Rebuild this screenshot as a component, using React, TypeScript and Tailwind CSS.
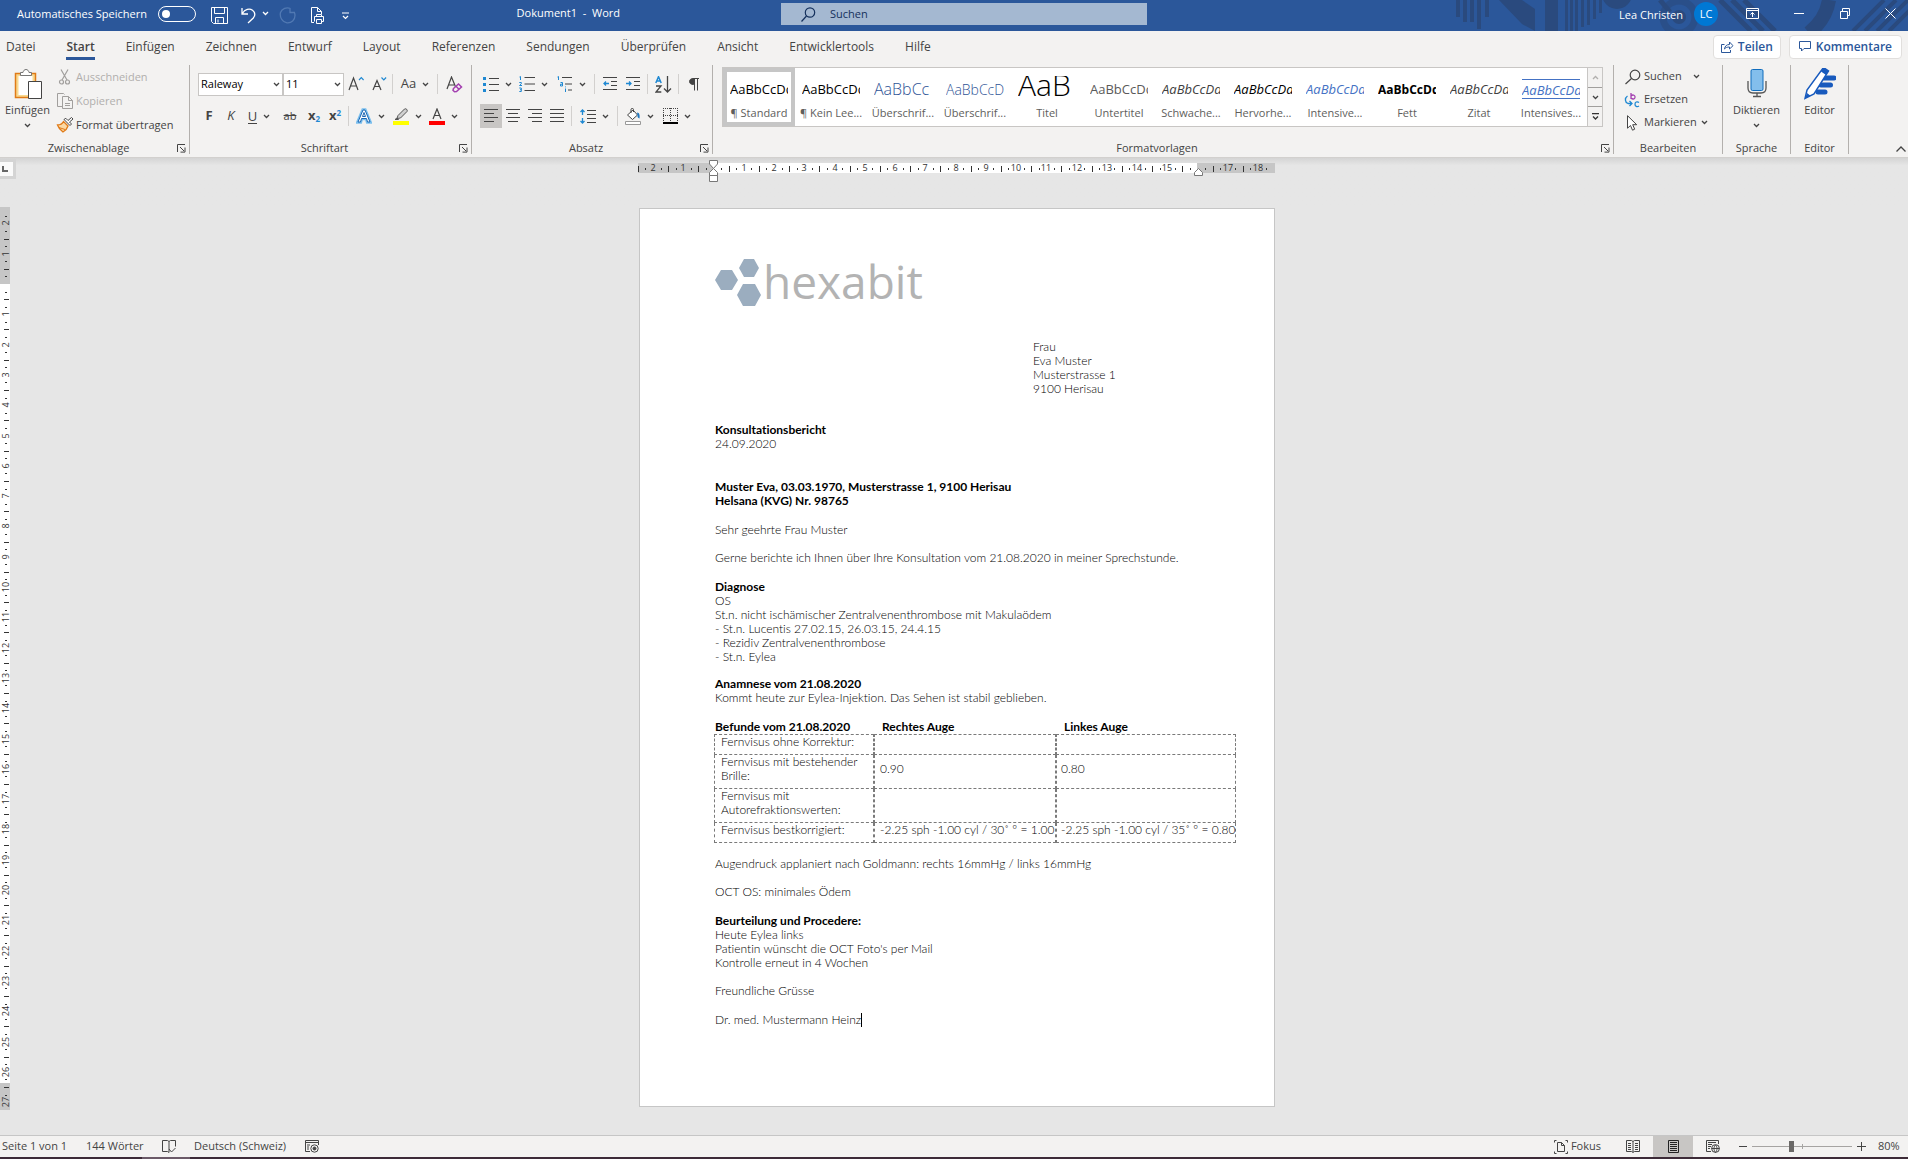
import type { ReactNode } from "react";
import clsx from "clsx";

const tabs = [
  "Datei",
  "Start",
  "Einfügen",
  "Zeichnen",
  "Entwurf",
  "Layout",
  "Referenzen",
  "Sendungen",
  "Überprüfen",
  "Ansicht",
  "Entwicklertools",
  "Hilfe",
];

const styles = [
  { label: "¶ Standard", sample: "text-[13px] text-black" },
  { label: "¶ Kein Lee...", sample: "text-[13px] text-black" },
  { label: "Überschrif...", sample: "text-base font-light text-[#2f5496]" },
  { label: "Überschrif...", sample: "text-sm font-light text-[#2f5496]" },
  { label: "Titel", sample: "text-3xl font-light text-black" },
  { label: "Untertitel", sample: "text-[13px] text-[#5a5a5a]" },
  { label: "Schwache...", sample: "text-[13px] italic text-[#404040]" },
  { label: "Hervorhe...", sample: "text-[13px] italic text-black" },
  { label: "Intensive...", sample: "text-[13px] italic text-[#4472c4]" },
  { label: "Fett", sample: "text-xs font-bold text-black" },
  { label: "Zitat", sample: "text-[13px] italic text-[#404040]" },
  {
    label: "Intensives...",
    sample: "text-[13px] italic text-[#4472c4] border-y border-[#4472c4]",
  },
];

const findings = [
  { name: "Fernvisus ohne Korrektur:", right: "", left: "" },
  { name: "Fernvisus mit bestehender Brille:", right: "0.90", left: "0.80" },
  { name: "Fernvisus mit Autorefraktionswerten:", right: "", left: "" },
  {
    name: "Fernvisus bestkorrigiert:",
    right: "-2.25 sph -1.00 cyl / 30˚ º = 1.00",
    left: "-2.25 sph -1.00 cyl / 35˚ º = 0.80",
  },
];

function Chevron({ className }: { className?: string }) {
  return (
    <svg className={clsx("shrink-0", className)} width="7" height="5" viewBox="0 0 7 5" fill="none" stroke="currentColor" strokeWidth="1.3">
      <path d="M1 1l2.5 2.5L6 1" />
    </svg>
  );
}

function Sep({ className = "mx-[3px]" }: { className?: string }) {
  return <span className={clsx("h-5 w-px shrink-0 bg-[#d2d0ce]", className)} />;
}

function Tool({
  label,
  className,
  menu,
  children,
}: {
  label: string;
  className?: string;
  menu?: boolean;
  children: ReactNode;
}) {
  return (
    <button
      type="button"
      aria-label={label}
      className={clsx("flex h-full shrink-0 items-center justify-center", menu && "gap-[6px]", className)}
    >
      {children}
      {menu && <Chevron />}
    </button>
  );
}

function Group({
  label,
  className,
  launcher,
  children,
}: {
  label: string;
  className?: string;
  launcher?: boolean;
  children: ReactNode;
}) {
  return (
    <section aria-label={label} className={clsx("flex shrink-0 flex-col border-r border-[#b3b0ad]", className)}>
      <div className="flex-1">{children}</div>
      <div className="flex h-3 items-center">
        <span className="flex-1 text-center leading-3">{label}</span>
        {launcher && (
          <button type="button" aria-label={label + " Optionen"} className="mr-[3px] flex w-[9px] shrink-0">
            <svg width="9" height="9" viewBox="0 0 9 9" fill="none" stroke="#444" strokeWidth="1">
              <path d="M.5 8V.5H8M3 3l4 4M8 3.5v4.6H3.5" />
            </svg>
          </button>
        )}
      </div>
    </section>
  );
}

function Lines({ rows }: { rows: [number, number][] }) {
  return (
    <svg width="14" height="14" viewBox="0 0 14 14" stroke="#444" fill="none">
      {rows.map(([x1, x2], i) => (
        <path key={i} d={`M${x1} ${i * 4 + 0.5}H${x2}`} />
      ))}
    </svg>
  );
}

function TitleArt() {
  return (
    <svg className="absolute inset-y-0 right-0" width="488" height="31" viewBox="0 0 488 31" fill="#2a4a7e" stroke="#2a4a7e">
      <g stroke="none">
        <path d="M36 0h4v17h-4zM43 0h4v22h-4zM50 0h4v22h-4zM57 0h4v29h-4zM65 0h4v17h-4z" />
        <path d="M79 0h23v0l13 9v22l-13-7z" />
        <path d="M125 0h13v31h-13zM145 0h3v31h-3zM150 0h3v31h-3zM155 0h3v31h-3zM161 0h3v27h-3zM167 0h3v25h-3zM173 0h3v19h-3zM179 0h3v13h-3z" />
        <circle cx="197" cy="-6" r="15" />
        <circle cx="259" cy="17" r="7" />
      </g>
      <g fill="none">
        <circle cx="259" cy="17" r="16" strokeWidth="7" opacity=".6" />
        <path d="M240 0l10 12M300 0l31 31M312 0l31 31M324 0l31 31" strokeWidth="5" />
        <path d="M409 0c-2 13-9 24-20 33" strokeWidth="14" />
        <path d="M433 31L464 0M445 31L476 0M457 31L488 0M469 31L500 0" strokeWidth="4" />
      </g>
    </svg>
  );
}

function TitleBar() {
  return (
    <header className="relative grid h-[31px] grid-cols-[781fr_366px_761fr] items-center overflow-hidden bg-[#2b579a] text-white">
      <TitleArt />
      <div className="flex items-center pl-[17px]">
        <label htmlFor="autosave" className="-mt-[2px] w-[133px] whitespace-nowrap">
          Automatisches Speichern
        </label>
        <input
          id="autosave"
          type="checkbox"
          role="switch"
          className="ml-2 -mt-1 flex h-4 w-[38px] appearance-none items-center rounded-full border border-white before:ml-[3px] before:size-2 before:rounded-full before:bg-white before:content-['']"
        />
        <button type="button" aria-label="Speichern" className="ml-[15px]">
          <svg width="17" height="17" viewBox="0 0 17 17" fill="none" stroke="#fff">
            <path d="M.5.5h16v16H2.500l-2-2zM3.500.5v6h10v-6M4.500 16.500v-6h8v6M7 12.500v3" />
          </svg>
        </button>
        <button type="button" aria-label="Rückgängig" className="ml-[13px] flex items-center gap-[6px]">
          <svg width="15" height="17" viewBox="0 0 15 17" fill="none" stroke="#fff" strokeWidth="1.3">
            <path d="M1 1v6h6M1.300 6.500C4 2 8.500 1 11.500 3.200c3 2.300 2.800 5.500.8 7.800L7 16" />
          </svg>
          <Chevron className="-mt-1" />
        </button>
        <button type="button" aria-label="Wiederholen" className="ml-[10px] text-[#5179b3]">
          <svg width="17" height="17" viewBox="0 0 17 17" fill="none" stroke="currentColor" strokeWidth="1.3">
            <path d="M11 1v4.500h5M11.500 1.500C7.500 0 3 1.500 1.500 5.500.5 10 3 15 8 15.800c4.500.4 8-3 8-7.300 0-1.200-.2-2-.6-3" />
          </svg>
        </button>
        <button type="button" aria-label="Drucken" className="ml-[14px]">
          <svg width="15" height="17" viewBox="0 0 15 17" fill="none" stroke="#fff">
            <path d="M4 15.500H1.500v-15h6l4 4V7M7.500.5v4h4M6.500 9.500v-2h5v2M4.500 14.500v-5h9v5h-2M6.500 12.500h5v4h-5z" />
          </svg>
        </button>
        <button type="button" aria-label="Symbolleiste anpassen" className="ml-[16px]">
          <svg width="9" height="8" viewBox="0 0 9 8" fill="none" stroke="#fff" strokeWidth="1.200">
            <path d="M1 1h7M2 4l2.500 2.500L7 4" />
          </svg>
        </button>
        <h1 className="ml-auto mr-[161px] -mt-1 whitespace-pre text-[11px]">Dokument1  -  Word</h1>
      </div>
      <div className="-mt-[3px] flex h-[22px] items-center bg-[#a4b8d1] pl-5 text-[#14305c]">
        <svg width="15" height="15" viewBox="0 0 15 15" fill="none" stroke="currentColor" strokeWidth="1.200">
          <circle cx="9" cy="5.500" r="4.700" />
          <path d="M5.500 9L.5 14.500" />
        </svg>
        <input
          aria-label="Suchen"
          placeholder="Suchen"
          className="ml-[14px] flex-1 bg-transparent placeholder:text-[#14305c] outline-none"
        />
      </div>
      <div className="relative flex items-center justify-end pr-[12px]">
        <span>Lea Christen</span>
        <span className="ml-[11px] mb-[3px] flex size-6 items-center justify-center rounded-full bg-[#0078d4]">LC</span>
        <div className="ml-7 -mt-[5px] flex items-center">
          <button type="button" aria-label="Menüband-Anzeigeoptionen">
            <svg width="13" height="11" viewBox="0 0 13 11" fill="none" stroke="#fff">
              <path d="M.5.5h12v10H.5zM.5 2.500h12M6.500 9V4.500M4.500 6.500l2-2 2 2" />
            </svg>
          </button>
          <button type="button" aria-label="Minimieren" className="ml-[35px]">
            <svg width="10" height="11" viewBox="0 0 10 11" stroke="#fff">
              <path d="M0 5.500h10" />
            </svg>
          </button>
          <button type="button" aria-label="Verkleinern" className="ml-[36px]">
            <svg width="10" height="11" viewBox="0 0 10 11" fill="none" stroke="#fff">
              <path d="M.5 3.500h7v7h-7zM2.500 3.500v-3h7v7h-2" />
            </svg>
          </button>
          <button type="button" aria-label="Schliessen" className="ml-[35px]">
            <svg width="11" height="11" viewBox="0 0 11 11" stroke="#fff">
              <path d="M.5.5l10 10M10.500.5l-10 10" />
            </svg>
          </button>
        </div>
      </div>
    </header>
  );
}

function TabRow() {
  return (
    <nav className="flex h-[31px] items-center pl-[6px] pr-[6px] text-xs">
      <div className="flex items-center gap-[31px]">
        {tabs.map((tab) => (
          <button
            key={tab}
            type="button"
            className={clsx(
              "h-[26px] border-b-[3px] leading-[26px]",
              tab === "Start" ? "border-[#2b579a] font-semibold" : "border-transparent",
            )}
          >
            {tab}
          </button>
        ))}
      </div>
      <div className="ml-auto flex gap-2 font-semibold text-[#2b579a]">
        <button type="button" className="flex h-6 items-center gap-1 rounded-sm border border-[#e1dfdd] bg-white px-[7px]">
          <svg width="13" height="12" viewBox="0 0 13 12" fill="none" stroke="currentColor">
            <path d="M3.500 3.500h-3v8h9V9M3.500 8c.5-3 2-4.500 5-4.500v-2.500l3.500 3.700L8.500 8V6C6 6 4.800 6.500 3.500 8z" />
          </svg>
          Teilen
        </button>
        <button type="button" className="flex h-6 items-center gap-1 rounded-sm border border-[#e1dfdd] bg-white px-[9px]">
          <svg width="13" height="11" viewBox="0 0 13 11" fill="none" stroke="currentColor">
            <path d="M.5.5h11v7H5L2.500 10V7.500h-2z" />
          </svg>
          Kommentare
        </button>
      </div>
    </nav>
  );
}

function Clipboard() {
  return (
    <Group label="Zwischenablage" launcher className="w-[190px]">
      <div className="flex">
        <button type="button" className="flex w-[55px] flex-col items-center pt-[3px] leading-4">
          <svg width="28" height="32" viewBox="0 0 28 32" fill="none">
            <path d="M1.500 5.500h20v24h-20z" fill="#f9d98f" stroke="#e07b18" strokeWidth="1.500" />
            <path d="M4.500 8h14v19h-14z" fill="#fff" />
            <path d="M6.500 7.500v-3h2.500c.5-4 5.500-4 6 0H17.500v3z" fill="#fff" stroke="#777" />
            <path d="M14.500 13.500h13v17h-13z" fill="#fff" stroke="#444" />
          </svg>
          <span className="mt-[2px]">Einfügen</span>
          <Chevron className="mt-[5px]" />
        </button>
        <div className="flex flex-col">
          <button type="button" disabled className="flex h-6 items-center text-[#b1afad]">
            <svg className="mr-[2px]" width="19" height="16" viewBox="0 0 19 16" fill="none" stroke="#a19f9d" strokeWidth="1.200">
              <path d="M6 .5l6 10.500M13 .5L7 11" />
              <circle cx="6.500" cy="13" r="2" />
              <circle cx="12.500" cy="13" r="2" />
            </svg>
            Ausschneiden
          </button>
          <button type="button" disabled className="flex h-6 items-center text-[#b1afad]">
            <svg className="mr-[2px]" width="19" height="16" viewBox="0 0 19 16" fill="none" stroke="#a19f9d">
              <path d="M7 13.500H2.500V.5h6l1 1M7.500 3.500h6l4 4v8h-10zM13.500 3.500v4h4M10 10.500h5M10 12.500h5" />
            </svg>
            Kopieren
          </button>
          <button type="button" className="flex h-6 items-center whitespace-nowrap">
            <svg className="mr-[2px]" width="19" height="16" viewBox="0 0 19 16" fill="none">
              <path d="M2.500 8c3 0 5-1.500 6-3.500l4.500 4.500c-1 3-3 5-5 6-2-1.500-4.500-4-5.500-7z" fill="#fbd9a5" stroke="#e07b18" strokeWidth="1.300" />
              <path d="M4 10.500l6 2" stroke="#e07b18" />
              <path d="M9 2.500l6 6 1.500-1.500-2-2L18 2l-1.500-1.500L13 3.500l-2.200-2.200z" fill="#fff" stroke="#444" />
            </svg>
            Format übertragen
          </button>
        </div>
      </div>
    </Group>
  );
}

function Combo({ label, value, className }: { label: string; value: string; className: string }) {
  return (
    <span className={clsx("relative flex h-[23px] shrink-0 items-center", className)}>
      <select aria-label={label} className="size-full appearance-none border border-[#c8c6c4] bg-white pl-[2px] text-black">
        <option>{value}</option>
      </select>
      <Chevron className="pointer-events-none absolute right-[3px]" />
    </span>
  );
}

function FontGroup() {
  return (
    <Group label="Schriftart" launcher className="w-[282px]">
      <div className="flex flex-col gap-2 pl-2 pt-[7px]">
        <div className="flex h-6 items-center">
          <Combo label="Schriftart" value="Raleway" className="w-[85px]" />
          <Combo label="Schriftgrad" value="11" className="w-[61px]" />
          <Tool label="Schrift vergrössern" className="w-6">
            <svg width="16" height="16" viewBox="0 0 16 16" fill="none" stroke="#444" strokeWidth="1.200">
              <path d="M1 14L5.500 2 10 14M2.500 10h6" />
              <path d="M11 4l2.300-2.300L15.600 4" stroke="#1e88d2" />
            </svg>
          </Tool>
          <Tool label="Schrift verkleinern" className="w-[22px]">
            <svg width="16" height="16" viewBox="0 0 16 16" fill="none" stroke="#444" strokeWidth="1.200">
              <path d="M2 14l4-9.500L10 14M3.500 10.500h5" />
              <path d="M10.500 1.500l2.300 2.300 2.300-2.300" stroke="#1e88d2" />
            </svg>
          </Tool>
          <Sep className="mx-[2px]" />
          <Tool label="Gross-/Kleinschreibung" menu className="w-10">
            <span className="text-[13px]">Aa</span>
          </Tool>
          <Sep className="mx-[2px]" />
          <Tool label="Formatierung löschen" className="w-7">
            <svg width="17" height="17" viewBox="0 0 17 17" fill="none" stroke="#444" strokeWidth="1.200">
              <path d="M1 13L5.500 1 10 12M2.500 9h5.500" />
              <path d="M7.500 12.500l5-4.500 3 3-5 4.500-2 .3-1.500-1.500zM10 10.300l3 3" stroke="#a33fb0" strokeWidth="1.500" fill="#f3f2f1" />
            </svg>
          </Tool>
        </div>
        <div className="flex h-6 items-center">
          <Tool label="Fett" className="w-[22px] text-[13px] font-bold">F</Tool>
          <Tool label="Kursiv" className="w-[22px] text-[13px] italic">K</Tool>
          <Tool label="Unterstrichen" menu className="w-[34px]">
            <span className="border-b border-[#444] text-[13px] leading-[14px]">U</span>
          </Tool>
          <Tool label="Durchgestrichen" className="w-7 line-through">ab</Tool>
          <Tool label="Tiefgestellt" className="w-5 text-[13px] font-bold">
            <span>
              x<sub className="text-[8px] text-[#1e88d2]">2</sub>
            </span>
          </Tool>
          <Tool label="Hochgestellt" className="w-[22px] text-[13px] font-bold">
            <span>
              x<sup className="text-[8px] text-[#1e88d2]">2</sup>
            </span>
          </Tool>
          <Sep className="mx-[2px]" />
          <Tool label="Texteffekte" menu className="w-[38px]">
            <svg width="16" height="16" viewBox="0 0 16 16" fill="none">
              <path d="M2 14L7 2h2l5 12h-2.500l-1-3.500h-5L4.500 14z" stroke="#7cc0ee" strokeWidth="3.500" />
              <path d="M2 14L7 2h2l5 12h-2.500l-1-3.500h-5L4.500 14zM6.500 8.500h3L8 4.500z" stroke="#1b66b3" fill="#fff" />
            </svg>
          </Tool>
          <Tool label="Texthervorhebung" menu className="w-9">
            <svg width="16" height="17" viewBox="0 0 16 17" fill="none">
              <path d="M5 7.500L11.500 1c1.500-1 3.500 1 2.500 2.500L7.500 10 4 10.500zM2 11.500l2-1.500 1.500 1.500z" fill="#d0d0d0" stroke="#555" />
              <path d="M0 13h16v4H0z" fill="#ff0" />
            </svg>
          </Tool>
          <Tool label="Schriftfarbe" menu className="w-[37px]">
            <svg width="16" height="17" viewBox="0 0 16 17" fill="none">
              <path d="M4 11L8 1l4 10M5.500 7.500h5" stroke="#444" strokeWidth="1.200" />
              <path d="M0 13h16v4H0z" fill="red" />
            </svg>
          </Tool>
        </div>
      </div>
    </Group>
  );
}

function ParagraphGroup() {
  return (
    <Group label="Absatz" launcher className="w-[241px]">
      <div className="flex flex-col gap-2 pl-2 pt-[7px]">
        <div className="flex h-6 items-center">
          <Tool label="Aufzählung" menu className="w-[35px]">
            <svg width="16" height="15" viewBox="0 0 16 15" stroke="#444">
              <path d="M6 1.500h10M6 7.500h10M6 13.500h10" />
              <path d="M0 0h3v3H0zM0 6h3v3H0zM0 12h3v3H0z" fill="#1e88d2" stroke="none" />
            </svg>
          </Tool>
          <Tool label="Nummerierung" menu className="w-[37px]">
            <svg width="16" height="16" viewBox="0 0 16 16" stroke="#444" fill="none">
              <path d="M5.500 1.500H16M5.500 8H16M5.500 14.500H16" />
              <path d="M.5 1l1-.5V4M.3 6.500h2v1.300l-1.800 1.700H3M.3 12h2v3.500h-2M1 13.700h1.300" stroke="#1e88d2" />
            </svg>
          </Tool>
          <Tool label="Liste mit mehreren Ebenen" menu className="w-[39px]">
            <svg width="16" height="16" viewBox="0 0 16 16" stroke="#444" fill="none">
              <path d="M5 1.500h10M8 8h7M11 14h4" />
              <path d="M.5 1l1-.5V4M3.500 6.500h2V10h-2V8.200h2M8.500 10.500v.8M8.500 12.500V16" stroke="#1e88d2" />
            </svg>
          </Tool>
          <Sep />
          <Tool label="Einzug verkleinern" className="w-[23px]">
            <svg width="14" height="14" viewBox="0 0 14 14" stroke="#444" fill="none">
              <path d="M0 .5h14M8 4.500h6M8 8.500h6M0 12.500h14" />
              <path d="M6 6.500H1M3 4.500l-2 2 2 2" stroke="#1e88d2" strokeWidth="1.300" />
            </svg>
          </Tool>
          <Tool label="Einzug vergrössern" className="w-[23px]">
            <svg width="14" height="14" viewBox="0 0 14 14" stroke="#444" fill="none">
              <path d="M0 .5h14M8 4.500h6M8 8.500h6M0 12.500h14" />
              <path d="M0 6.500h5M3 4.500l2 2-2 2" stroke="#1e88d2" strokeWidth="1.300" />
            </svg>
          </Tool>
          <Sep />
          <Tool label="Sortieren" className="w-6">
            <svg width="17" height="17" viewBox="0 0 17 17" fill="none" strokeWidth="1.300">
              <path d="M.8 7L3.500.7 6.200 7M1.700 5h3.600" stroke="#1e88d2" strokeWidth="1.500" />
              <path d="M1 10h5l-5 6h5.300" stroke="#444" />
              <path d="M12.500 0v16M9 12.500l3.500 3.500 3.500-3.500" stroke="#444" />
            </svg>
          </Tool>
          <Sep />
          <Tool label="Absatzmarken anzeigen" className="w-6">
            <svg width="10" height="13" viewBox="0 0 10 13" stroke="#444" fill="none">
              <path d="M4.500.5C1.500.5.5 2 .5 3.500s1 3 4 3z" fill="#444" />
              <path d="M4 .5h6M5.500 0v12.500M8.500 0v12.500" />
            </svg>
          </Tool>
        </div>
        <div className="flex h-6 items-center">
          <Tool label="Linksbündig" className="w-[22px] bg-[#c8c6c4]">
            <Lines rows={[[0, 14], [0, 10], [0, 14], [0, 10]]} />
          </Tool>
          <Tool label="Zentriert" className="w-[22px]">
            <Lines rows={[[0, 14], [2, 12], [0, 14], [2, 12]]} />
          </Tool>
          <Tool label="Rechtsbündig" className="w-[22px]">
            <Lines rows={[[0, 14], [4, 14], [0, 14], [4, 14]]} />
          </Tool>
          <Tool label="Blocksatz" className="w-[22px]">
            <Lines rows={[[0, 14], [0, 14], [0, 14], [0, 14]]} />
          </Tool>
          <Sep />
          <Tool label="Zeilenabstand" menu className="w-[39px]">
            <svg width="16" height="15" viewBox="0 0 16 15" stroke="#444" fill="none">
              <path d="M7 1.500h9M7 5.500h9M7 9.500h9M7 13.500h9" />
              <path d="M2.500 6V.8M.5 3l2-2 2 2M2.500 9v5.200M.5 12l2 2 2-2" stroke="#1e88d2" strokeWidth="1.300" />
            </svg>
          </Tool>
          <Sep />
          <Tool label="Schattierung" menu className="w-[37px]">
            <svg width="16" height="17" viewBox="0 0 16 17" fill="none">
              <path d="M2.500 7L8 2l4.500 5L7.500 11.500z" fill="#fff" stroke="#444" />
              <path d="M6 5V1.500c0-1.500 2.500-1.500 2.500 0V4" stroke="#444" />
              <path d="M12 4.500c2.500 0 3 3 2.500 6-1.500-.5-2.500-2-2-3.500z" fill="#1e77c0" />
              <path d="M.5 13.500h15v3H.5z" fill="#fff" stroke="#999" />
            </svg>
          </Tool>
          <Tool label="Rahmen" menu className="w-[37px]">
            <svg width="15" height="16" viewBox="0 0 15 16" fill="none" stroke="#444">
              <path d="M0 .5h15M0 7.500h15M.5 0v14M7.500 0v14M14.500 0v14" strokeDasharray="1 1" />
              <path d="M0 15h15" stroke="#000" strokeWidth="2" />
            </svg>
          </Tool>
        </div>
      </div>
    </Group>
  );
}

function StylesGroup() {
  return (
    <Group label="Formatvorlagen" launcher className="min-w-0 flex-1">
      <div className="ml-[9px] mr-[10px] mt-[2px] flex h-[60px] border border-[#c8c6c4] bg-white">
        <div className="flex flex-1 overflow-hidden">
          {styles.map((s, i) => (
            <button
              key={i}
              type="button"
              className={clsx(
                "flex w-[72px] shrink-0 flex-col items-center justify-between border-4 pb-px pt-1",
                i === 0 ? "border-[#c6c6c6]" : "border-transparent",
              )}
            >
              <span
                className={clsx(
                  "block w-[58px] overflow-hidden whitespace-nowrap text-left",
                  s.sample,
                  s.label === "Titel" && "h-6 leading-[17px]",
                  s.label === "Intensives..." && "mt-[3px] h-5 leading-5",
                  s.label !== "Titel" && s.label !== "Intensives..." && "h-6 leading-[27px]",
                )}
              >
                {s.label === "Titel" ? "AaB" : s.label === "Überschrif..." && i === 2 ? "AaBbCc" : "AaBbCcDd"}
              </span>
              <span className="whitespace-nowrap leading-4 text-[#605e5c]">{s.label}</span>
            </button>
          ))}
        </div>
        <div className="flex w-[15px] flex-col border-l border-[#c8c6c4] bg-[#f3f2f1]">
          <button type="button" aria-label="Nach oben" className="flex flex-1 items-center justify-center text-[#b1afad]">
            <Chevron className="rotate-180" />
          </button>
          <button type="button" aria-label="Nach unten" className="flex flex-1 items-center justify-center border-y border-[#a19f9d]">
            <Chevron />
          </button>
          <button type="button" aria-label="Weitere" className="flex flex-1 items-center justify-center">
            <svg width="7" height="7" viewBox="0 0 7 7" fill="none" stroke="#333" strokeWidth="1.300">
              <path d="M0 .7h7M1 3.500L3.500 6 6 3.500" />
            </svg>
          </button>
        </div>
      </div>
    </Group>
  );
}

function EditingGroup() {
  return (
    <Group label="Bearbeiten" className="w-[109px]">
      <div className="flex flex-col items-start pl-[10px]">
        <button type="button" className="flex h-[23px] items-center">
          <svg className="mr-[3px]" width="17" height="16" viewBox="0 0 17 16" fill="none" stroke="#444" strokeWidth="1.200">
            <circle cx="11" cy="6" r="4.800" />
            <path d="M7.500 9.500L1.500 15" />
          </svg>
          Suchen
          <Chevron className="ml-[11px]" />
        </button>
        <button type="button" className="flex h-[23px] items-center">
          <svg className="mr-[3px]" width="17" height="16" viewBox="0 0 17 16" fill="none" strokeWidth="1.300">
            <path d="M7 1v6M7 4c2-2 4.500-.5 4 1.500-.3 1.800-2.500 2-4 .5" stroke="#a33fb0" />
            <path d="M15 10.500c-2-1.500-4-.3-4 1.700s2 3.200 4 1.800M3.500 4C.5 6 .8 10.500 4 11.500h4M5.500 9l2.500 2.500L5.500 14" stroke="#1e88d2" />
          </svg>
          Ersetzen
        </button>
        <button type="button" className="flex h-[23px] items-center">
          <svg className="mr-[3px]" width="17" height="16" viewBox="0 0 17 16" fill="#fff" stroke="#444">
            <path d="M3.500.7v12.500l3-2.700 2 4.700 2.200-1-2-4.500h4z" />
          </svg>
          Markieren
          <Chevron className="ml-1" />
        </button>
      </div>
    </Group>
  );
}

function Ribbon() {
  return (
    <div className="flex h-24 border-b border-[#d2d0ce] py-[3px]">
      <Clipboard />
      <FontGroup />
      <ParagraphGroup />
      <StylesGroup />
      <EditingGroup />
      <Group label="Sprache" className="w-[68px]">
        <button type="button" className="flex w-full flex-col items-center pt-[3px] leading-4">
          <svg width="20" height="32" viewBox="0 0 20 32" fill="none">
            <path d="M1 13v7c0 3 2 5 5 5h8c3 0 5-2 5-5v-7M10 25v3.500M6 28.500h8" stroke="#555" strokeWidth="1.300" />
            <rect x="4" y="1.500" width="12" height="21" rx="1.500" fill="#83beec" stroke="#0f6cbd" />
          </svg>
          <span className="mt-[2px]">Diktieren</span>
          <Chevron className="mt-[5px]" />
        </button>
      </Group>
      <Group label="Editor" className="w-[58px]">
        <button type="button" className="flex w-full flex-col items-center pt-[3px] leading-4">
          <svg width="32" height="32" viewBox="0 0 32 32" fill="none">
            <path d="M20 10h10M17 17h9.500M14 24h7" stroke="#185abd" strokeWidth="5" strokeLinecap="round" />
            <path d="M19.500-.5l5 3.500L10 26l-9 4.500L3 22z" fill="#fff" stroke="#185abd" strokeWidth="1.500" />
            <path d="M19.500-.5l5 3.500-2.500 4-5-3.500zM3 25l3.500 2.800L1 30.500z" fill="#185abd" />
          </svg>
          <span className="mt-[2px]">Editor</span>
        </button>
      </Group>
      <div className="flex w-[59px] items-end justify-end pb-[2px] pr-[2px]">
        <button type="button" aria-label="Menüband reduzieren">
          <svg width="10" height="6" viewBox="0 0 10 6" fill="none" stroke="#444" strokeWidth="1.300">
            <path d="M.5 5.500L5 1l4.500 4.500" />
          </svg>
        </button>
      </div>
    </div>
  );
}

// Marks every quarter centimetre: a number, a dot, a dash, a dot.
function marks(from: number, to: number) {
  const list: { at: number; kind: "num" | "dash" | "dot" }[] = [];
  for (let q = from * 4; q <= to * 4; q++) {
    if (q === 0) continue;
    list.push({ at: q / 4, kind: q % 4 === 0 ? "num" : q % 2 === 0 ? "dash" : "dot" });
  }
  return list;
}

function HorizontalRuler() {
  const zero = 75.5;
  const cm = 30.25;
  return (
    <svg width="637" height="22" viewBox="0 0 637 22" fontSize="9" fill="#333">
      <path d="M0 3h637v10H0z" fill="#c6c6c6" />
      <path d="M75 3h484v10H75z" fill="#fff" />
      {marks(-2.5, 18.25).map(({ at, kind }) => {
        const x = Math.round(zero + at * cm);
        if (at === 16) return null;
        if (kind === "num")
          return (
            <text key={at} x={x} y="11" textAnchor="middle">
              {Math.abs(at)}
            </text>
          );
        return kind === "dash" ? (
          <rect key={at} x={x} y="6" width="1" height="6" />
        ) : (
          <rect key={at} x={x} y="8" width="1" height="2" />
        );
      })}
      <g fill="#fff" stroke="#777">
        <path d="M71.500.5h8v3.500l-4 4.500-4-4.500zM71.500 15.500v-3l4-4 4 4v3zM71.500 15.500h8v6h-8z" />
        <path d="M556.500 15.500v-3l4-4 4 4v3z" />
      </g>
    </svg>
  );
}

function VerticalRuler() {
  const zero = 77;
  const cm = 30.3;
  return (
    <svg className="shrink-0" width="10" height="903" viewBox="0 0 10 903" fontSize="9" fill="#333">
      <path d="M0 0h10v903H0z" fill="#c6c6c6" />
      <path d="M0 77h10v799H0z" fill="#fff" />
      {marks(-2.25, 27.25).map(({ at, kind }) => {
        const y = Math.round(zero + at * cm);
        if (kind === "num")
          return (
            <text key={at} transform={`translate(9 ${y}) rotate(-90)`} textAnchor="middle">
              {Math.abs(at)}
            </text>
          );
        return kind === "dash" ? (
          <rect key={at} x="4" y={y} width="5" height="1" />
        ) : (
          <rect key={at} x="5" y={y} width="2" height="1" />
        );
      })}
    </svg>
  );
}

function Letter() {
  const cell = "border-x border-b border-dashed border-[#7a7a7a] align-top font-light";
  return (
    <article className="min-h-[899px] w-[636px] border border-[#c6c6c6] bg-white pl-[75px] pr-[38px] pt-[50px] font-['Lato',sans-serif] text-xs font-light leading-[14px] text-black [font-variant-ligatures:none]">
      <div className="flex h-[47px] items-center">
        <svg width="48" height="47" viewBox="0 0 48 47" fill="#9badbf">
          <path d="M0 21l6-10h11l6 10-6 10H6zM24 9l5-9h10l5 9-5 9H29zM22 36l6-11h12l6 11-6 11H28z" />
        </svg>
        <span className="-mt-[2px] font-['Open_Sans',sans-serif] text-[46px] font-normal leading-[47px] text-[#b3b3b3]">hexabit</span>
      </div>
      <address className="ml-[318px] mt-[34px] not-italic">
        Frau
        <br />
        Eva Muster
        <br />
        Musterstrasse 1
        <br />
        9100 Herisau
      </address>
      <h2 className="mt-[27px] font-bold">Konsultationsbericht</h2>
      <p>24.09.2020</p>
      <p className="mt-[29px] font-bold">
        Muster Eva, 03.03.1970, Musterstrasse 1, 9100 Herisau
        <br />
        Helsana (KVG) Nr. 98765
      </p>
      <p className="mt-[15px]">Sehr geehrte Frau Muster</p>
      <p className="mt-[14px]">
        Gerne berichte ich Ihnen über Ihre Konsultation vom 21.08.2020 in meiner Sprechstunde.
      </p>
      <h2 className="mt-[15px] font-bold">Diagnose</h2>
      <p>
        OS
        <br />
        St.n. nicht ischämischer Zentralvenenthrombose mit Makulaödem
        <br />
        - St.n. Lucentis 27.02.15, 26.03.15, 24.4.15
        <br />
        - Rezidiv Zentralvenenthrombose
        <br />- St.n. Eylea
      </p>
      <h2 className="mt-[13px] font-bold">Anamnese vom 21.08.2020</h2>
      <p>Kommt heute zur Eylea-Injektion. Das Sehen ist stabil geblieben.</p>
      <table className="-ml-px mt-[15px] w-[522px] table-fixed border-separate border-spacing-0">
        <thead>
          <tr className="text-left">
            <th className="w-[160px] pl-px">Befunde vom 21.08.2020</th>
            <th className="w-[182px] pl-2">Rechtes Auge</th>
            <th className="pl-2">Linkes Auge</th>
          </tr>
        </thead>
        <tbody>
          {findings.map((f, i) => (
            <tr key={f.name} className={clsx(i === 0 && "h-[21px]", i === 3 && "h-5", i % 3 !== 0 && "h-[34px]")}>
              <td className={clsx(cell, "pl-[6px]", i === 0 && "border-t")}>{f.name}</td>
              <td className={clsx(cell, "whitespace-nowrap pl-[5px]", i === 0 && "border-t", i === 1 && "pt-[7px]")}>{f.right}</td>
              <td className={clsx(cell, "whitespace-nowrap pl-1", i === 0 && "border-t", i === 1 && "pt-[7px]")}>{f.left}</td>
            </tr>
          ))}
        </tbody>
      </table>
      <p className="mt-[14px]">Augendruck applaniert nach Goldmann: rechts 16mmHg / links 16mmHg</p>
      <p className="mt-[14px]">OCT OS: minimales Ödem</p>
      <h2 className="mt-[15px] font-bold">Beurteilung und Procedere:</h2>
      <p>
        Heute Eylea links
        <br />
        Patientin wünscht die OCT Foto's per Mail
        <br />
        Kontrolle erneut in 4 Wochen
      </p>
      <p className="mt-[14px]">Freundliche Grüsse</p>
      <p className="mt-[15px] flex">
        Dr. med. Mustermann Heinz
        <span className="h-[14px] w-px bg-black" />
      </p>
    </article>
  );
}

function StatusBar() {
  return (
    <footer className="flex h-[22px] items-center border-t border-[#c6c6c6] bg-[#f3f2f1] pl-[2px] pr-2">
      <span className="w-[84px]">Seite 1 von 1</span>
      <span className="w-[76px]">144 Wörter</span>
      <button type="button" aria-label="Rechtschreibung" className="w-8">
        <svg width="14" height="13" viewBox="0 0 14 13" fill="none" stroke="#444">
          <path d="M7 1.500L5.500.5h-5v11h5L7 12.500v-11L8.500.5h5v6M7 9l2.500 3 4-4" />
        </svg>
      </button>
      <span className="w-[111px]">Deutsch (Schweiz)</span>
      <button type="button" aria-label="Makro aufzeichnen">
        <svg width="14" height="13" viewBox="0 0 14 13" fill="none" stroke="#444">
          <path d="M5 11.500H.5V.5h13V5M.5 2.500h13M2 5h3M2 7h2M2 9h2" />
          <circle cx="9.500" cy="8.500" r="3.700" fill="#f3f2f1" />
          <circle cx="9.500" cy="8.500" r="1.500" fill="#444" />
        </svg>
      </button>
      <button type="button" className="ml-auto flex items-center gap-[3px]">
        <svg width="14" height="14" viewBox="0 0 14 14" fill="none" stroke="#444">
          <path d="M2.500.5h-2v2M11.500.5h2v2M2.500 13.500h-2v-2M11.500 13.500h2v-2M3.500 2.500h4l3 3v6h-7zM7.500 2.500v3h3" />
        </svg>
        Fokus
      </button>
      <button type="button" aria-label="Lesemodus" className="ml-3 flex w-10 justify-center">
        <svg width="14" height="13" viewBox="0 0 14 13" fill="none" stroke="#444">
          <path d="M7 1.500L5.500.5h-5v11h5L7 12.500l1.500-1h5V.5h-5zV12M2 3.500h3M2 5.500h3M2 7.500h3M2 9.500h3M9 3.500h3M9 5.500h3M9 7.500h3M9 9.500h3" />
        </svg>
      </button>
      <button type="button" aria-label="Seitenlayout" className="flex h-full w-10 items-center justify-center bg-[#c8c6c4]">
        <svg width="11" height="13" viewBox="0 0 11 13" fill="none" stroke="#222">
          <path d="M.5.5h10v12H.5zM2 2.500h7M2 4.500h7M2 6.500h7M2 8.500h7M2 10.500h7" />
        </svg>
      </button>
      <button type="button" aria-label="Weblayout" className="flex w-10 justify-center">
        <svg width="14" height="13" viewBox="0 0 14 13" fill="none" stroke="#444">
          <path d="M5 11.500H.5V.5h12V4M2 2.500h8M2 4.500h4M2 6.500h3M2 8.500h2" />
          <circle cx="9.500" cy="8.500" r="3.900" />
          <path d="M5.500 8.500h8M9.500 5c-2 2-2 5 0 7.500M9.500 5c2 2 2 5 0 7.500" />
        </svg>
      </button>
      <button type="button" aria-label="Verkleinern" className="ml-[6px]">
        <svg width="8" height="9" viewBox="0 0 8 9" stroke="#444">
          <path d="M0 4.500h8" />
        </svg>
      </button>
      <input
        type="range"
        aria-label="Zoom"
        min={0}
        max={100}
        defaultValue={39}
        className="ml-[5px] h-3 w-[100px] appearance-none bg-transparent bg-linear-to-r from-[#a6a4a2] to-[#a6a4a2] bg-size-[1px_5px] bg-center bg-no-repeat [&::-webkit-slider-runnable-track]:h-px [&::-webkit-slider-runnable-track]:bg-[#a6a4a2] [&::-webkit-slider-thumb]:-mt-[5px] [&::-webkit-slider-thumb]:h-[11px] [&::-webkit-slider-thumb]:w-[5px] [&::-webkit-slider-thumb]:appearance-none [&::-webkit-slider-thumb]:bg-[#6b6967]"
      />
      <button type="button" aria-label="Vergrössern" className="ml-[5px]">
        <svg width="9" height="9" viewBox="0 0 9 9" stroke="#444">
          <path d="M0 4.500h9M4.500 0v9" />
        </svg>
      </button>
      <span className="ml-3 w-[22px]">80%</span>
    </footer>
  );
}

export default function App() {
  return (
    <div className="flex min-h-screen flex-col bg-[#e6e6e6] font-['Open_Sans',sans-serif] text-[11px] text-[#444]">
      <TitleBar />
      <div className="bg-[#f3f2f1]">
        <TabRow />
        <Ribbon />
      </div>
      <main className="flex-1">
        <div className="flex h-[49px] items-start bg-linear-to-b from-[#d4d4d4] to-[#e6e6e6] to-15%">
          <button type="button" aria-label="Tabstopp" className="mt-px flex h-5 w-4 items-center border-y-[3px] border-r-[3px] border-[#d4d4d4] bg-[#fafafa] pl-[2px]">
            <svg width="6" height="6" viewBox="0 0 6 6" fill="none" stroke="#666" strokeWidth="2">
              <path d="M1 0v5h5" />
            </svg>
          </button>
          <div className="flex flex-1 justify-center pr-[11px] pt-[2px]">
            <HorizontalRuler />
          </div>
        </div>
        <div className="flex">
          <VerticalRuler />
          <div className="flex flex-1 items-start justify-center pr-1 pt-px">
            <Letter />
          </div>
        </div>
      </main>
      <StatusBar />
      <div className="flex h-[2px] bg-[#3d2b38]">
        <span className="ml-[142px] w-12 bg-[#6b5a68]" />
      </div>
    </div>
  );
}
